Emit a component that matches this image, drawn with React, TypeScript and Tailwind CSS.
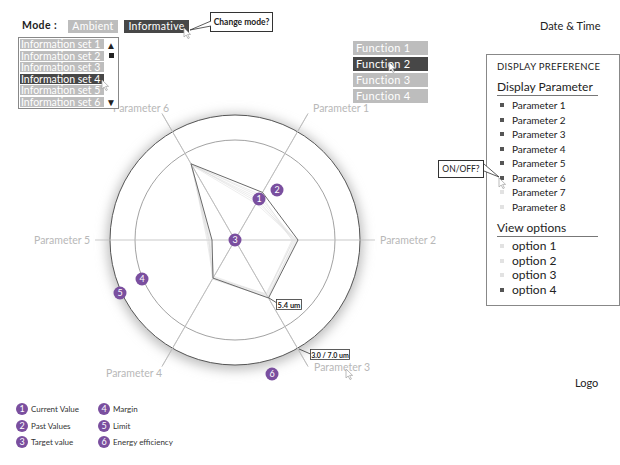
import React from "react";

const CX = 235;
const CY = 240;
const FONT = "Lato, 'Open Sans', sans-serif";

function pt(angleDeg: number, r: number): [number, number] {
  const a = (angleDeg * Math.PI) / 180;
  return [CX + r * Math.cos(a), CY - r * Math.sin(a)];
}

const angles = [60, 0, -60, -120, 180, 120];
const current = [55, 63, 67, 44, 23, 88];
const past = [
  [50, 60, 66, 45, 25, 88],
  [46, 58, 64, 43, 27, 87],
  [42, 61, 65, 44, 26, 86],
  [52, 57, 63, 42, 24, 87],
  [48, 59, 62, 44, 28, 86],
  [44, 62, 66, 45, 26, 88],
];

function polyPoints(vals: number[]) {
  return vals
    .map((v, i) => pt(angles[i], v))
    .map(([x, y]) => `${x.toFixed(1)},${y.toFixed(1)}`)
    .join(" ");
}

function Badge({ x, y, n }: { x: number; y: number; n: number }) {
  return (
    <g>
      <circle cx={x} cy={y} r={6.5} fill="#7a4f9f" />
      <text x={x} y={y + 3.2} textAnchor="middle" fontSize="9" fill="#fff" fontFamily={FONT}>
        {n}
      </text>
    </g>
  );
}

function Cursor({ x, y }: { x: number; y: number }) {
  return (
    <path
      d={`M${x} ${y} l0 9 l2.2 -2 l1.8 3.6 l1.4 -0.7 l-1.8 -3.5 l3 0 z`}
      fill="#fff"
      stroke="#aaa"
      strokeWidth="0.8"
    />
  );
}

function LegendItem({ n, label }: { n: number; label: string }) {
  return (
    <div className="flex items-center gap-[3px] h-[16.5px] whitespace-nowrap">
      <div className="w-[12px] h-[12px] rounded-full bg-[#7a4f9f] text-white text-[9px] leading-[12px] text-center">{n}</div>
      <span className="text-[8px] text-[#333]">{label}</span>
    </div>
  );
}

export default function App() {
  const params = ["Parameter 1", "Parameter 2", "Parameter 3", "Parameter 4", "Parameter 5", "Parameter 6", "Parameter 7", "Parameter 8"];
  const paramOn = [true, true, true, true, true, true, false, false];
  const options = ["option 1", "option 2", "option 3", "option 4"];
  const optOn = [false, false, false, true];
  const sets = [1, 2, 3, 4, 5, 6];
  const funcs = [1, 2, 3, 4];

  return (
    <div className="relative w-[620px] h-[465px] bg-white overflow-hidden text-[#222]" style={{ fontFamily: FONT }}>
      {/* Chart */}
      <svg className="absolute left-0 top-0" width="620" height="465" viewBox="0 0 620 465">
        <defs>
          <filter id="glow" x="-30%" y="-30%" width="160%" height="160%">
            <feGaussianBlur stdDeviation="6" />
          </filter>
        </defs>
        <circle cx={CX} cy={CY + 2} r={128} fill="#bdbdbd" filter="url(#glow)" />
        <circle cx={CX} cy={CY} r={125} fill="#fff" stroke="#555" strokeWidth="1" />
        <circle cx={CX} cy={CY} r={100} fill="none" stroke="#8a8a8a" strokeWidth="0.8" />
        <line x1={95} y1={CY} x2={375} y2={CY} stroke="#bbb" strokeWidth="0.8" />
        {[60, -60, -120, 120].map((a) => {
          const [x1, y1] = pt(a, 146);
          const [x2, y2] = pt(a + 180, 146);
          return <line key={a} x1={x1} y1={y1} x2={x2} y2={y2} stroke="#bbb" strokeWidth="0.8" />;
        })}
        {past.map((p, i) => (
          <polygon key={i} points={polyPoints(p)} fill="none" stroke="#dadada" strokeWidth="0.5" />
        ))}
        <polygon points={polyPoints(current)} fill="none" stroke="#6a6a6a" strokeWidth="1" />
        <g fontSize="10.5" fill="#b8b8b8" fontFamily={FONT}>
          <text x={313} y={112}>Parameter 1</text>
          <text x={380} y={244}>Parameter 2</text>
          <text x={314} y={371}>Parameter 3</text>
          <text x={106} y={377}>Parameter 4</text>
          <text x={34} y={244}>Parameter 5</text>
          <text x={113} y={112}>Parameter 6</text>
        </g>
        <line x1={269} y1={298} x2={277} y2={303} stroke="#333" strokeWidth="0.8" />
        <rect x={276.5} y={299.5} width={25} height={10} fill="#fff" stroke="#333" strokeWidth="0.8" />
        <text x={289} y={307.5} textAnchor="middle" fontSize="7.5" fontWeight="700" fill="#222" fontFamily={FONT}>5.4 um</text>
        <line x1={299} y1={349} x2={310.5} y2={354} stroke="#333" strokeWidth="0.8" />
        <rect x={310.5} y={349.5} width={39} height={10} fill="#fff" stroke="#333" strokeWidth="0.8" />
        <text x={330} y={357.5} textAnchor="middle" fontSize="7" fontWeight="700" fill="#222" fontFamily={FONT}>3.0 / 7.0 um</text>
        <Badge x={259} y={199} n={1} />
        <Badge x={277} y={190} n={2} />
        <Badge x={235} y={240} n={3} />
        <Badge x={142} y={279} n={4} />
        <Badge x={120} y={293} n={5} />
        <Badge x={272} y={374} n={6} />
      </svg>

      {/* Mode row */}
      <div className="absolute left-[22px] top-[19px] flex items-center h-[14px]">
        <span className="text-[10.5px] font-bold w-[46px] tracking-[0.4px]">Mode :</span>
        <div className="h-[13px] w-[50px] bg-[#bdbdbd] text-white text-[10.5px] leading-[13px] text-center tracking-[0.3px]">Ambient</div>
        <div className="ml-[6px] h-[13px] w-[65px] bg-[#474747] text-white text-[10.5px] leading-[13px] text-center tracking-[0.3px]">Informative</div>
      </div>

      {/* Change mode callout */}
      <div className="absolute left-[210px] top-[12px] w-[63px] h-[20px] border border-[#333] bg-white text-[8.5px] font-bold leading-[18px] text-center">
        Change mode?
      </div>

      {/* Information set list */}
      <div className="absolute left-[18px] top-[37px] w-[101px] h-[72px] border border-[#888] bg-white flex">
        <div className="flex flex-col gap-[1.5px] pt-[1px] pl-[1px]">
          {sets.map((n) => (
            <div
              key={n}
              className={`w-[84px] h-[10px] text-[10.5px] leading-[10px] pl-[1px] text-white whitespace-nowrap overflow-hidden ${n === 4 ? "bg-[#474747]" : "bg-[#bdbdbd]"}`}
            >
              Information set {n}
            </div>
          ))}
        </div>
        <div className="flex-1 flex flex-col items-center pt-[2px] pb-[1px] justify-between">
          <div className="flex flex-col items-center gap-[3px]">
            <span className="text-[10px] leading-[10px]">▲</span>
            <div className="w-[5px] h-[5px] bg-[#222]" />
          </div>
          <span className="text-[10px] leading-[10px]">▼</span>
        </div>
      </div>

      {/* Functions */}
      <div className="absolute left-[353px] top-[41px] flex flex-col gap-[2px]">
        {funcs.map((n) => (
          <div
            key={n}
            className={`w-[75px] h-[14px] text-[11px] leading-[14px] pl-[3px] text-white tracking-[0.3px] ${n === 2 ? "bg-[#474747]" : "bg-[#bdbdbd]"}`}
          >
            Function {n}
          </div>
        ))}
      </div>

      {/* Date & Time */}
      <div className="absolute left-[540px] top-[18px] text-[11px] leading-[16px]">Date &amp; Time</div>

      {/* Display preference panel */}
      <div className="absolute left-[486px] top-[54px] w-[134px] h-[252px] border border-[#888] bg-white pl-[10px] pt-[6px]">
        <div className="text-[9.5px] leading-[12px] tracking-[0.3px]">DISPLAY PREFERENCE</div>
        <div className="mt-[7px] w-[101px] border-b border-[#777] text-[12px] leading-[14px] pb-[1px]">Display Parameter</div>
        <div className="mt-[2px] flex flex-col">
          {params.map((p, i) => (
            <div key={p} className="flex items-center h-[14.5px]">
              <div className={`w-[4px] h-[4px] ml-[3px] ${paramOn[i] ? "bg-[#555]" : "bg-[#e2e2e2]"}`} />
              <span className="ml-[8px] text-[10px] leading-[12px]">{p}</span>
            </div>
          ))}
        </div>
        <div className="mt-[7px] w-[101px] border-b border-[#777] text-[12px] leading-[14px] pb-[1px]">View options</div>
        <div className="mt-[2px] flex flex-col">
          {options.map((o, i) => (
            <div key={o} className="flex items-center h-[14.5px]">
              <div className={`w-[4px] h-[4px] ml-[3px] ${optOn[i] ? "bg-[#555]" : "bg-[#e2e2e2]"}`} />
              <span className="ml-[8px] text-[12px] leading-[14px]">{o}</span>
            </div>
          ))}
        </div>
      </div>

      {/* ON/OFF callout */}
      <div className="absolute left-[438px] top-[160px] w-[46px] h-[18px] border border-[#333] bg-white text-[8.5px] leading-[16px] text-center">
        ON/OFF?
      </div>

      {/* Logo */}
      <div className="absolute left-[575px] top-[375px] text-[11px] leading-[16px]">Logo</div>

      {/* Legend */}
      <div className="absolute left-[16px] top-[401px] flex">
        <div className="flex flex-col w-[82px]">
          <LegendItem n={1} label="Current Value" />
          <LegendItem n={2} label="Past Values" />
          <LegendItem n={3} label="Target value" />
        </div>
        <div className="flex flex-col">
          <LegendItem n={4} label="Margin" />
          <LegendItem n={5} label="Limit" />
          <LegendItem n={6} label="Energy efficiency" />
        </div>
      </div>

      {/* Overlay: callout tails and cursors */}
      <svg className="absolute left-0 top-0 pointer-events-none" width="620" height="465" viewBox="0 0 620 465">
        <polyline points="211,21 190,30 211,26" fill="#fff" stroke="#333" strokeWidth="0.8" />
        <polyline points="484,164 499,177 484,171" fill="#fff" stroke="#333" strokeWidth="0.8" />
        <Cursor x={184} y={28} />
        <Cursor x={102} y={80} />
        <Cursor x={389} y={62} />
        <Cursor x={499} y={178} />
        <Cursor x={346} y={369} />
      </svg>
    </div>
  );
}
